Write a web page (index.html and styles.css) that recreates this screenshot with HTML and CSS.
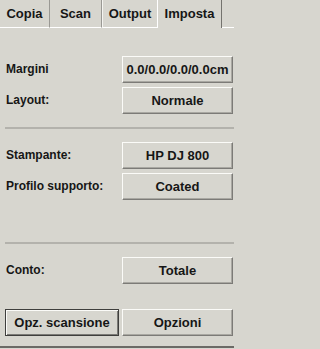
FILE: index.html
```html
<!DOCTYPE html>
<html lang="it">
<head>
<meta charset="utf-8">
<title>Imposta</title>
<link rel="stylesheet" href="styles.css">
</head>
<body>
<div class="app">
  <div class="tabs">
    <div class="tab t-copia">Copia</div>
    <div class="tab t-scan">Scan</div>
    <div class="tab t-output">Output</div>
    <div class="tab t-imposta active">Imposta</div>
    <div class="tab-fill"></div>
  </div>
  <div class="panel">
    <div class="group first">
      <div class="row"><span class="label">Margini</span><button class="btn">0.0/0.0/0.0/0.0cm</button></div>
      <div class="row"><span class="label">Layout:</span><button class="btn">Normale</button></div>
    </div>
    <div class="sep"></div>
    <div class="group">
      <div class="row"><span class="label">Stampante:</span><button class="btn">HP DJ 800</button></div>
      <div class="row"><span class="label">Profilo supporto:</span><button class="btn">Coated</button></div>
    </div>
    <div class="sep sep-low"></div>
    <div class="group">
      <div class="row"><span class="label">Conto:</span><button class="btn">Totale</button></div>
    </div>
    <div class="actions">
      <button class="btn default">Opz. scansione</button>
      <button class="btn">Opzioni</button>
    </div>
  </div>
  <div class="bottom-line"></div>
</div>
</body>
</html>
```
FILE: styles.css
```css
* { box-sizing: border-box; }
html, body {
  margin: 0;
  padding: 0;
  background: #d7d6cf;
}
body {
  font-family: "Liberation Sans", Arial, sans-serif;
  color: #161616;
  width: 234px;
  height: 349px;
  overflow: hidden;
}
.app {
  display: flex;
  flex-direction: column;
  height: 349px;
}
.tabs {
  display: flex;
  align-items: flex-start;
  height: 28px;
}
.tab {
  height: 28px;
  line-height: 27px;
  font-size: 13px;
  font-weight: bold;
  text-align: center;
  border-bottom: 1px solid #ffffff;
  background: #d7d6cf;
}
.t-copia { width: 50px; border-right: 1px solid #9a9994; }
.t-scan { width: 52px; border-right: 1px solid #9a9994; }
.t-output { width: 55px; border-left: 1px solid #f4f4f0; }
.t-imposta {
  width: 65px;
  border-left: 1px solid #ffffff;
  border-right: 1px solid #74736e;
  border-bottom: none;
}
.tab-fill {
  flex: 1;
  height: 28px;
  border-bottom: 1px solid #ffffff;
}
.panel {
  flex: 1;
  display: flex;
  flex-direction: column;
  padding: 28px 1px 0 5px;
}
.group {
  display: flex;
  flex-direction: column;
  gap: 4px;
}
.row {
  display: flex;
  align-items: center;
  justify-content: space-between;
  height: 27px;
}
.label {
  font-size: 12px;
  font-weight: bold;
  line-height: 27px;
  padding-left: 1px;
}
.btn {
  font-family: "Liberation Sans", Arial, sans-serif;
  font-size: 13px;
  font-weight: bold;
  color: #161616;
  background: #d7d6cf;
  width: 111px;
  height: 27px;
  padding: 0;
  margin: 0;
  border: 1px solid;
  border-color: #fbfbf8 #7c7b77 #7c7b77 #fbfbf8;
  box-shadow: inset -1px -1px 0 #a9a8a2;
  border-radius: 0;
}
.sep {
  height: 2px;
  background: #b3b2ac;
  margin: 13px -1px 13px 0;
}
.sep-low {
  margin-top: 42px;
}
.actions {
  display: flex;
  justify-content: space-between;
  margin-top: 25px;
}
.btn.default {
  width: 114px;
  border: 1px solid #3f3f3d;
  box-shadow: inset 1px 1px 0 #fbfbf8, inset -1px -1px 0 #7c7b77;
}
.bottom-line {
  height: 2px;
  background: #6b6a66;
  margin-bottom: 1px;
}
```
